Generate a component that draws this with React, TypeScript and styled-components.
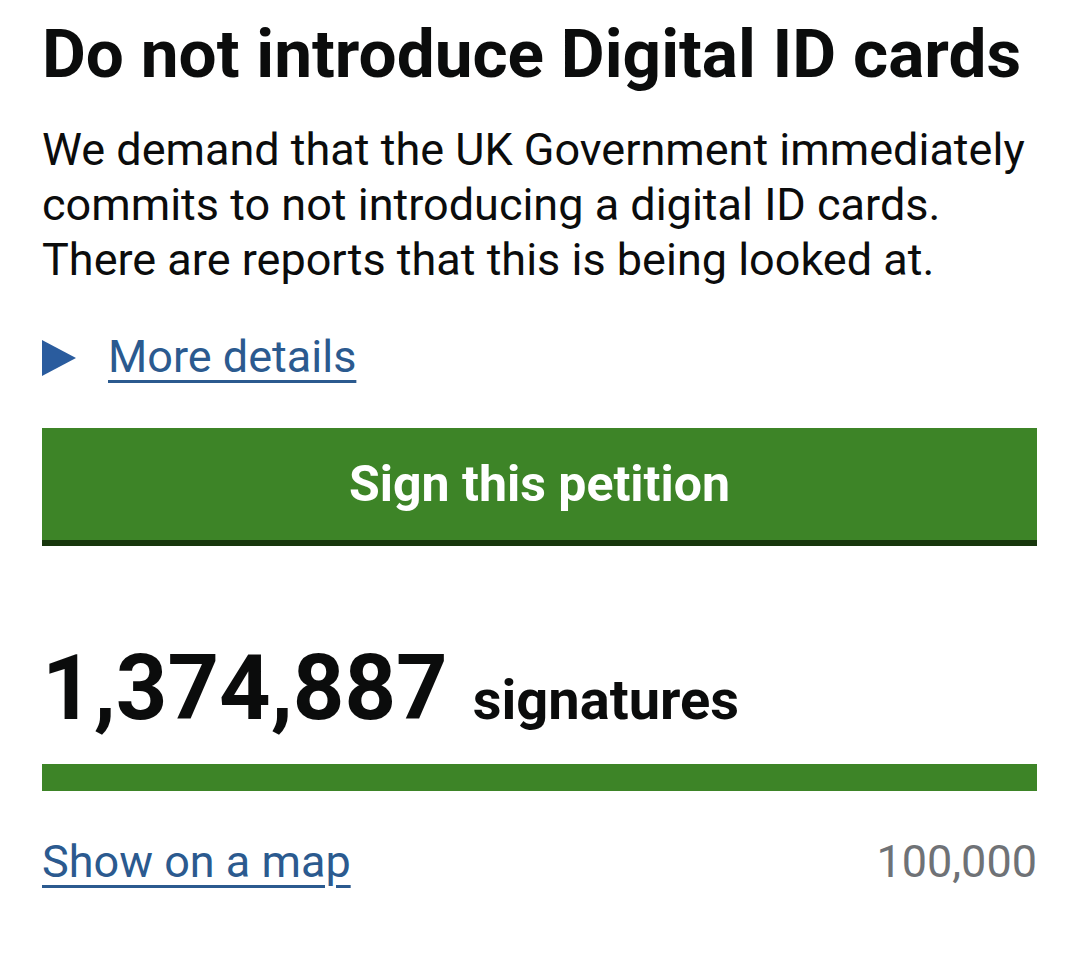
import React from 'react';
import styled, { createGlobalStyle } from 'styled-components';

const GlobalStyle = createGlobalStyle`
    html, body {
        margin: 0;
        padding: 0;
        background: #ffffff;
    }
    body {
        font-family: Roboto, "Noto Sans", "Liberation Sans", sans-serif;
        color: #0b0c0c;
    }
`;

const Page = styled.main`
    width: 1080px;
    padding: 14px 43px 0 42px;
    box-sizing: border-box;
`;

const Title = styled.h1`
    margin: 0;
    font-size: 67.5px;
    line-height: 80px;
    font-weight: 700;
    color: #0b0c0c;
`;

const Summary = styled.p`
    margin: 28px 0 0;
    font-size: 45px;
    line-height: 55px;
    font-weight: 400;
`;

const Details = styled.div`
    display: flex;
    align-items: center;
    gap: 32px;
    margin-top: 43px;
`;

const Triangle = styled.span`
    width: 0;
    height: 0;
    margin-top: 2px;
    border-top: 18px solid transparent;
    border-bottom: 18px solid transparent;
    border-left: 34px solid #2a5c9e;
`;

const Link = styled.a`
    font-size: 45px;
    line-height: 54px;
    color: #2b5a8f;
    text-decoration: underline;
    text-decoration-thickness: 3px;
    text-underline-offset: 8px;
`;

const SignButton = styled.button`
    display: block;
    width: 100%;
    height: 118px;
    margin-top: 44px;
    border: 0;
    border-bottom: 6px solid #17360c;
    background: #3d8427;
    color: #ffffff;
    font-family: inherit;
    font-size: 50px;
    font-weight: 700;
    padding: 0;
`;

const Count = styled.div`
    display: flex;
    align-items: baseline;
    gap: 25px;
    margin-top: 98px;
`;

const Number = styled.span`
    font-size: 90px;
    font-weight: 700;
    line-height: 1;
`;

const Label = styled.span`
    font-size: 56px;
    font-weight: 700;
`;

const Progress = styled.div`
    height: 27px;
    margin-top: 30px;
    background: #3d8427;
`;

const Footer = styled.div`
    display: flex;
    justify-content: space-between;
    align-items: baseline;
    margin-top: 44px;
`;

const Target = styled.span`
    font-size: 45px;
    color: #6f7276;
`;

export default function App() {
    return (
        <>
            <GlobalStyle />
            <Page>
                <Title>Do not introduce Digital ID cards</Title>
                <Summary>
                    We demand that the UK Government immediately commits to not introducing a digital ID cards.
                    There are reports that this is being looked at.
                </Summary>
                <Details>
                    <Triangle />
                    <Link href="#details">More details</Link>
                </Details>
                <SignButton>Sign this petition</SignButton>
                <Count>
                    <Number>1,374,887</Number>
                    <Label>signatures</Label>
                </Count>
                <Progress />
                <Footer>
                    <Link href="#map">Show on a map</Link>
                    <Target>100,000</Target>
                </Footer>
            </Page>
        </>
    );
}
